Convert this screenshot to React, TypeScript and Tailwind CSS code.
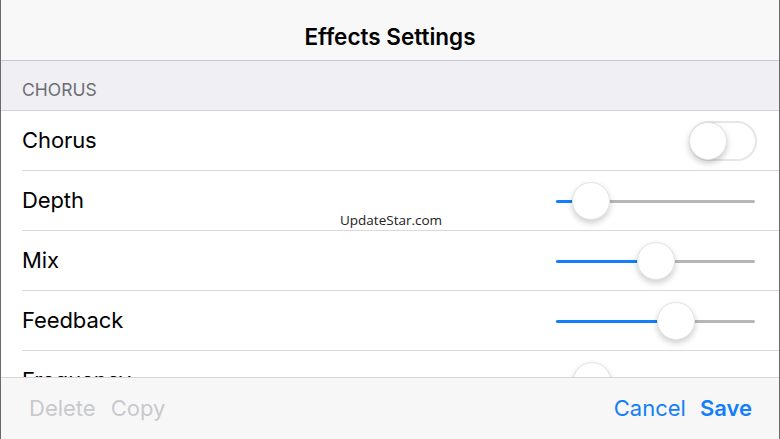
import React from "react";

const font = { fontFamily: "Inter, 'Liberation Sans', sans-serif" };

function Slider({ value }: { value: number }) {
  const center = 19 + value * (199 - 38);
  return (
    <div className="relative w-[199px] h-[40px] ml-auto">
      <div className="absolute left-0 right-0 top-[19px] h-[3px] rounded-full bg-[#b7b7b7]" />
      <div
        className="absolute left-0 top-[19px] h-[3px] rounded-full bg-[#147efb]"
        style={{ width: center }}
      />
      <div
        className="absolute top-[1px] w-[38px] h-[38px] rounded-full bg-white border border-[#e4e4e4] shadow-[0_3px_6px_rgba(0,0,0,0.2)]"
        style={{ left: center - 19 }}
      />
    </div>
  );
}

function Row({ label, children }: { label: string; children?: React.ReactNode }) {
  return (
    <div className="ml-[21px] h-[60px] border-b border-[#d9d9dd] flex items-center pr-[24px] shrink-0">
      <span className="text-[22px] text-black tracking-[-0.1px]">{label}</span>
      {children}
    </div>
  );
}

export default function App() {
  return (
    <div
      className="w-[780px] h-[439px] overflow-hidden relative flex flex-col bg-white border-l border-r border-[#6a6a6a]"
      style={font}
    >
      <div className="h-[61px] shrink-0 bg-[#f8f8f8] border-b border-[#c9c9cd] flex items-center justify-center pt-[14px]">
        <span className="text-[22.5px] font-semibold text-black">Effects Settings</span>
      </div>
      <div className="h-[50px] shrink-0 bg-[#efeff4] border-b border-[#d4d4d8] flex items-center pl-[21px] pt-[9px]">
        <span className="text-[17.5px] text-[#6d6d72]">CHORUS</span>
      </div>
      <div className="flex-1 flex flex-col overflow-hidden">
        <Row label="Chorus">
          <div className="ml-auto mr-[-2px] w-[68px] h-[40px] rounded-full border-2 border-[#e6e6ea] bg-white relative">
            <div className="absolute left-[-2px] top-[-1px] w-[38px] h-[38px] rounded-full bg-white border border-[#e2e2e2] shadow-[0_3px_6px_rgba(0,0,0,0.22)]" />
          </div>
        </Row>
        <Row label="Depth">
          <Slider value={0.1} />
        </Row>
        <Row label="Mix">
          <Slider value={0.5} />
        </Row>
        <Row label="Feedback">
          <Slider value={0.63} />
        </Row>
        <Row label="Frequency">
          <Slider value={0.105} />
        </Row>
      </div>
      <div className="absolute left-0 right-0 bottom-0 h-[62px] bg-[#f7f7f7] border-t border-[#d6d6da] flex items-center px-[28px]">
        <span className="text-[22px] text-[#c9c9cd]">Delete</span>
        <span className="text-[22px] text-[#c9c9cd] ml-[15px]">Copy</span>
        <span className="text-[22px] text-[#147efb] ml-auto">Cancel</span>
        <span className="text-[22px] text-[#147efb] font-semibold ml-[14px] mr-[-1px]">Save</span>
      </div>
      <div
        className="absolute left-[339px] top-[210px] text-[13.5px] text-[#222]"
        style={{ fontFamily: "'Open Sans', 'Liberation Sans', sans-serif" }}
      >
        UpdateStar.com
      </div>
    </div>
  );
}
